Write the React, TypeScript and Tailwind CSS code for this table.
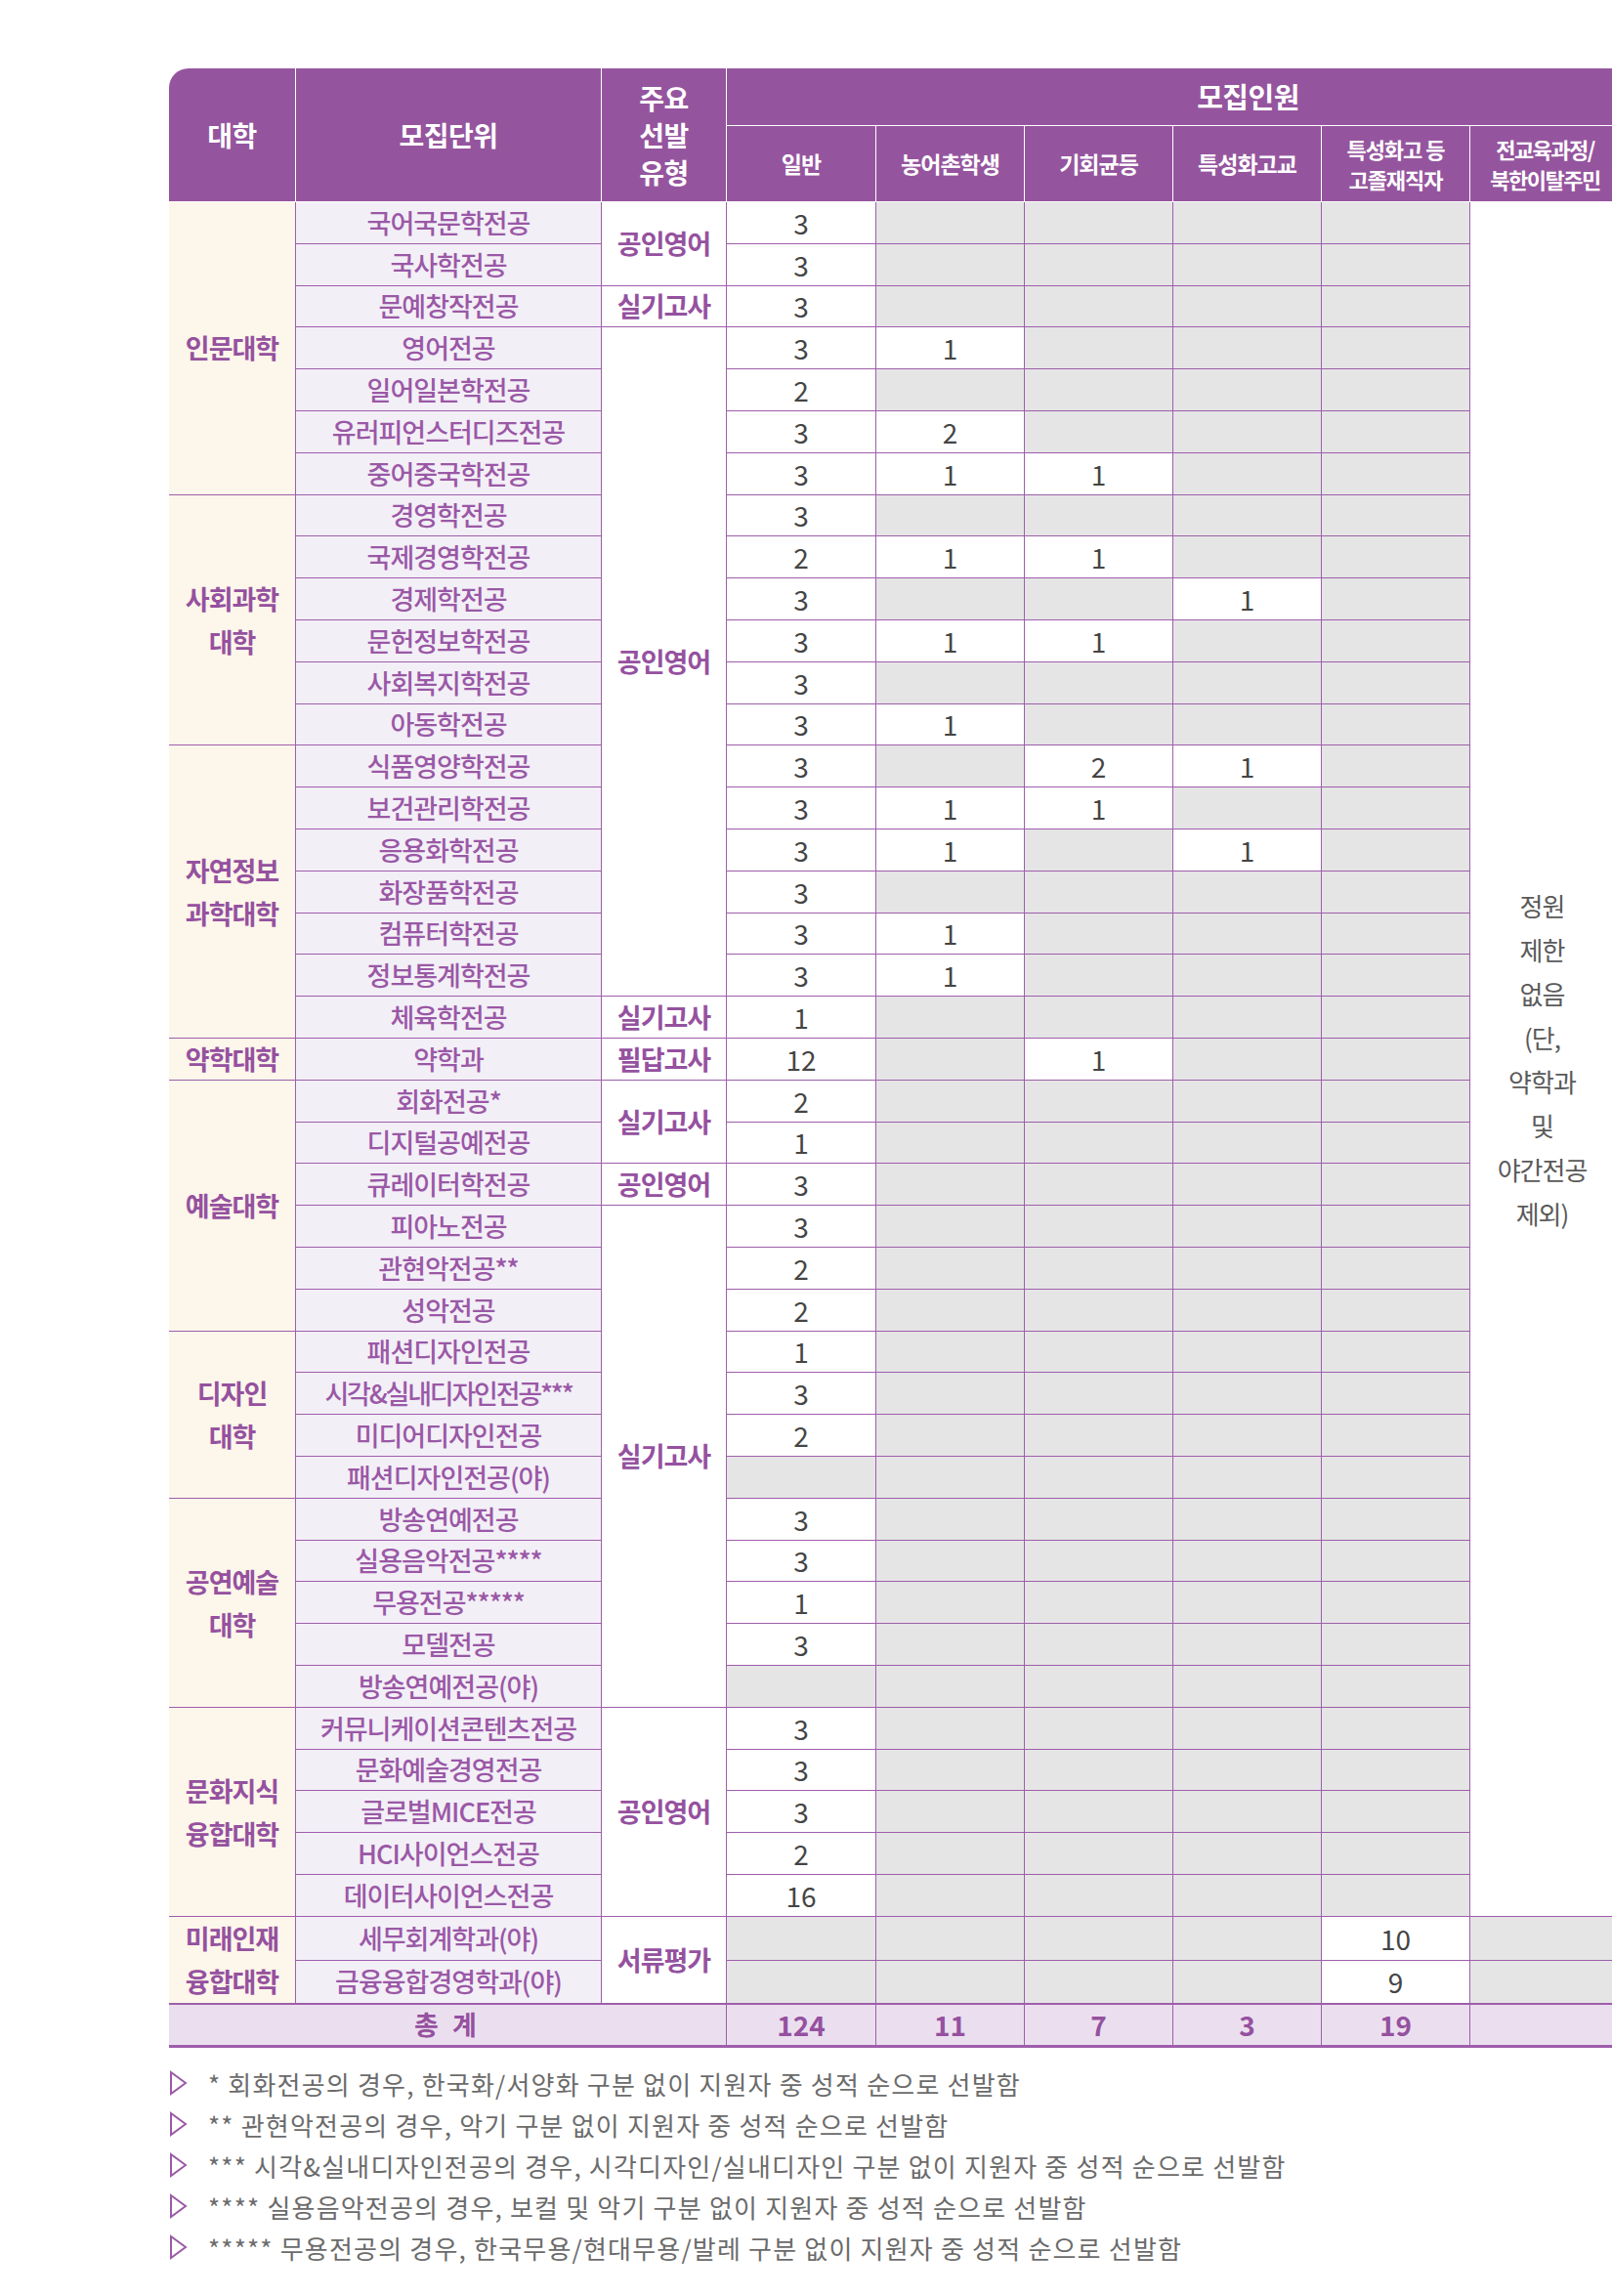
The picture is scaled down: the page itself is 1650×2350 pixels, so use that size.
import React from "react";

type Row = {
  unit: string;
  college?: string[];
  collegeSpan?: number;
  method?: string;
  methodSpan?: number;
  vals: (string | null)[];
  tight?: boolean;
};

const rows: Row[] = [
  { college: ["인문대학"], collegeSpan: 7, unit: "국어국문학전공", method: "공인영어", methodSpan: 2, vals: ["3"] },
  { unit: "국사학전공", vals: ["3"] },
  { unit: "문예창작전공", method: "실기고사", methodSpan: 1, vals: ["3"] },
  { unit: "영어전공", method: "공인영어", methodSpan: 16, vals: ["3", "1"] },
  { unit: "일어일본학전공", vals: ["2"] },
  { unit: "유러피언스터디즈전공", vals: ["3", "2"] },
  { unit: "중어중국학전공", vals: ["3", "1", "1"] },
  { college: ["사회과학", "대학"], collegeSpan: 6, unit: "경영학전공", vals: ["3"] },
  { unit: "국제경영학전공", vals: ["2", "1", "1"] },
  { unit: "경제학전공", vals: ["3", null, null, "1"] },
  { unit: "문헌정보학전공", vals: ["3", "1", "1"] },
  { unit: "사회복지학전공", vals: ["3"] },
  { unit: "아동학전공", vals: ["3", "1"] },
  { college: ["자연정보", "과학대학"], collegeSpan: 7, unit: "식품영양학전공", vals: ["3", null, "2", "1"] },
  { unit: "보건관리학전공", vals: ["3", "1", "1"] },
  { unit: "응용화학전공", vals: ["3", "1", null, "1"] },
  { unit: "화장품학전공", vals: ["3"] },
  { unit: "컴퓨터학전공", vals: ["3", "1"] },
  { unit: "정보통계학전공", vals: ["3", "1"] },
  { unit: "체육학전공", method: "실기고사", methodSpan: 1, vals: ["1"] },
  { college: ["약학대학"], collegeSpan: 1, unit: "약학과", method: "필답고사", methodSpan: 1, vals: ["12", null, "1"] },
  { college: ["예술대학"], collegeSpan: 6, unit: "회화전공*", method: "실기고사", methodSpan: 2, vals: ["2"] },
  { unit: "디지털공예전공", vals: ["1"] },
  { unit: "큐레이터학전공", method: "공인영어", methodSpan: 1, vals: ["3"] },
  { unit: "피아노전공", method: "실기고사", methodSpan: 12, vals: ["3"] },
  { unit: "관현악전공**", vals: ["2"] },
  { unit: "성악전공", vals: ["2"] },
  { college: ["디자인", "대학"], collegeSpan: 4, unit: "패션디자인전공", vals: ["1"] },
  { unit: "시각&실내디자인전공***", vals: ["3"], tight: true },
  { unit: "미디어디자인전공", vals: ["2"] },
  { unit: "패션디자인전공(야)", vals: [null] },
  { college: ["공연예술", "대학"], collegeSpan: 5, unit: "방송연예전공", vals: ["3"] },
  { unit: "실용음악전공****", vals: ["3"] },
  { unit: "무용전공*****", vals: ["1"] },
  { unit: "모델전공", vals: ["3"] },
  { unit: "방송연예전공(야)", vals: [null] },
  { college: ["문화지식", "융합대학"], collegeSpan: 5, unit: "커뮤니케이션콘텐츠전공", method: "공인영어", methodSpan: 5, vals: ["3"] },
  { unit: "문화예술경영전공", vals: ["3"] },
  { unit: "글로벌MICE전공", vals: ["3"] },
  { unit: "HCI사이언스전공", vals: ["2"] },
  { unit: "데이터사이언스전공", vals: ["16"] },
  { college: ["미래인재", "융합대학"], collegeSpan: 2, unit: "세무회계학과(야)", method: "서류평가", methodSpan: 2, vals: [null, null, null, null, "10"] },
  { unit: "금융융합경영학과(야)", vals: [null, null, null, null, "9"] },
];

const notes = [
  "* 회화전공의 경우, 한국화/서양화 구분 없이 지원자 중 성적 순으로 선발함",
  "** 관현악전공의 경우, 악기 구분 없이 지원자 중 성적 순으로 선발함",
  "*** 시각&실내디자인전공의 경우, 시각디자인/실내디자인 구분 없이 지원자 중 성적 순으로 선발함",
  "**** 실용음악전공의 경우, 보컬 및 악기 구분 없이 지원자 중 성적 순으로 선발함",
  "***** 무용전공의 경우, 한국무용/현대무용/발레 구분 없이 지원자 중 성적 순으로 선발함",
];

const head = "border-r border-b border-white bg-[#95559e] text-white font-bold text-center align-middle p-0";
const line = "border-r border-b border-[#9e5eab] text-center align-middle p-0";

function Triangle() {
  return (
    <svg width="20" height="26" viewBox="0 0 20 26" className="shrink-0">
      <polygon points="2,2 17,13 2,24" fill="none" stroke="#9b5aa7" strokeWidth="2" strokeLinejoin="miter" />
    </svg>
  );
}

export default function App() {
  return (
    <div className="w-[1650px] overflow-hidden bg-white pt-[70px] pl-[173px] font-['Noto_Sans_CJK_KR',sans-serif]">
      <div className="w-[1637px] overflow-hidden rounded-tl-[20px]">
        <table className="w-[1637px] table-fixed border-separate border-spacing-0">
          <colgroup>
            <col className="w-[130px]" />
            <col className="w-[313px]" />
            <col className="w-[128px]" />
            <col className="w-[153px]" />
            <col className="w-[152px]" />
            <col className="w-[152px]" />
            <col className="w-[152px]" />
            <col className="w-[152px]" />
            <col className="w-[154px]" />
            <col className="w-[152px]" />
          </colgroup>
          <thead>
            <tr className="h-[59px]">
              <th rowSpan={2} className={`${head} text-[28px] tracking-[-0.5px]`}>대학</th>
              <th rowSpan={2} className={`${head} text-[28px] tracking-[-0.5px]`}>모집단위</th>
              <th rowSpan={2} className={`${head} text-[28px] leading-[38px] tracking-[-0.5px]`}>
                주요
                <br />
                선발
                <br />
                유형
              </th>
              <th colSpan={7} className={`${head} border-r-0 text-[29px] tracking-[-0.5px]`}>모집인원</th>
            </tr>
            <tr className="h-[78px]">
              <th className={`${head} text-[23px] tracking-[-1px]`}>일반</th>
              <th className={`${head} text-[23px] tracking-[-1px]`}>농어촌학생</th>
              <th className={`${head} text-[23px] tracking-[-1px]`}>기회균등</th>
              <th className={`${head} text-[23px] tracking-[-1px]`}>특성화고교</th>
              <th className={`${head} text-[22px] leading-[31px] tracking-[-1px]`}>
                특성화고 등
                <br />
                고졸재직자
              </th>
              <th className={`${head} text-[22px] leading-[31px] tracking-[-1.5px] whitespace-nowrap`}>
                전교육과정/
                <br />
                북한이탈주민
              </th>
              <th className={`${head} border-r-0`} />
            </tr>
          </thead>
          <tbody>
            {rows.map((r, i) => (
              <tr key={i} className={i % 5 === 2 ? "h-[42px]" : "h-[43px]"}>
                {r.college && (
                  <td
                    rowSpan={r.collegeSpan}
                    className={`${line} bg-[#fdf6ea] text-[27px] font-bold tracking-[-1px] text-[#95519f] ${
                      r.college.length > 1 ? "leading-[44px]" : "leading-[1.2]"
                    }`}
                  >
                    {r.college.map((c, k) => (
                      <div key={k}>{c}</div>
                    ))}
                  </td>
                )}
                <td
                  className={`${line} bg-[#f3eff7] text-[27px] font-medium leading-[1.2] whitespace-nowrap text-[#9a58a6] ${
                    r.tight ? "tracking-[-2.2px]" : "tracking-[-1px]"
                  }`}
                >
                  {r.unit}
                </td>
                {r.method && (
                  <td
                    rowSpan={r.methodSpan}
                    className={`${line} bg-white text-[27px] font-bold leading-[1.2] tracking-[-1px] text-[#95519f]`}
                  >
                    {r.method}
                  </td>
                )}
                {[0, 1, 2, 3, 4].map((k) => {
                  const v = r.vals[k];
                  return (
                    <td
                      key={k}
                      className={`${line} text-[28px] leading-[1.1] text-[#454545] ${v ? "bg-white" : "bg-[#e5e5e5]"}`}
                    >
                      {v ?? ""}
                    </td>
                  );
                })}
                {i === 0 && (
                  <td
                    rowSpan={41}
                    className={`${line} bg-white text-[26px] leading-[45px] tracking-[-1px] text-[#5a5a5a]`}
                  >
                    <div className="pr-[6px]">
                      정원
                      <br />
                      제한
                      <br />
                      없음
                      <br />
                      (단,
                      <br />
                      약학과
                      <br />
                      및
                      <br />
                      야간전공
                      <br />
                      제외)
                    </div>
                  </td>
                )}
                {i === 0 && <td rowSpan={41} className="border-b border-[#9e5eab] bg-white" />}
                {i >= 41 && <td className={`${line} bg-[#e5e5e5]`} />}
                {i >= 41 && <td className="border-b border-[#9e5eab] bg-[#e5e5e5]" />}
              </tr>
            ))}
            <tr className="h-[45px] bg-[#ebdfef]">
              <td
                colSpan={3}
                className="border-r border-t border-b-[3px] border-[#9e5eab] text-center align-middle text-[27px] font-bold tracking-[4px] text-[#95519f]"
              >
                총 계
              </td>
              {["124", "11", "7", "3", "19"].map((t) => (
                <td
                  key={t}
                  className="border-r border-t border-b-[3px] border-[#9e5eab] text-center align-middle text-[28px] font-bold leading-[1.1] text-[#95519f]"
                >
                  {t}
                </td>
              ))}
              <td className="border-r border-t border-b-[3px] border-[#9e5eab]" />
              <td className="border-t border-b-[3px] border-[#9e5eab]" />
            </tr>
          </tbody>
        </table>
      </div>

      <ul className="mt-[15px] flex flex-col">
        {notes.map((n) => (
          <li key={n} className="flex h-[42px] items-center gap-[20px]">
            <Triangle />
            <span className="whitespace-nowrap text-[26px] tracking-[1.2px] text-[#6b6b6b]">{n}</span>
          </li>
        ))}
      </ul>
    </div>
  );
}
